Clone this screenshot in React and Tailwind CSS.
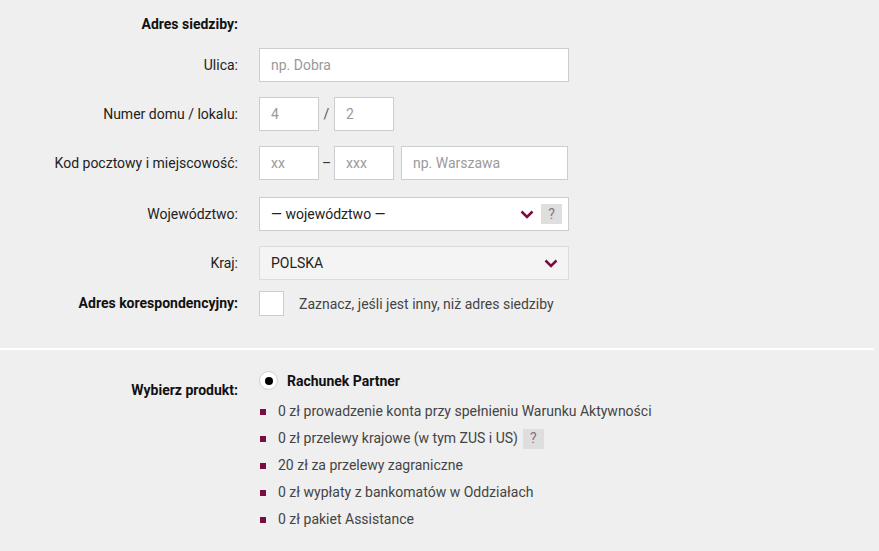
import React from 'react';

const Chevron = () => (
  <svg width="14" height="9" viewBox="0 0 14 9" fill="none">
    <path d="M1.5 1.5L7 7l5.5-5.5" stroke="#7b0c3f" strokeWidth="2.5" />
  </svg>
);

const Help = ({ className = '' }) => (
  <span className={`flex h-[20px] w-[21px] items-center justify-center bg-[#dedede] text-[14px] text-[#8a6f8a] ${className}`}>?</span>
);

const Row = ({ label, bold, children, className = '' }) => (
  <div className={`flex items-center ${className}`}>
    <div className={`w-[238px] shrink-0 text-right text-[14px] ${bold ? 'font-bold text-[#111]' : 'text-[#222]'}`}>
      {label}
    </div>
    <div className="ml-[21px] flex items-center">{children}</div>
  </div>
);

const Field = ({ placeholder, width, value }) => (
  <div className={`flex h-[34px] ${width} items-center border border-[#cdcdcd] bg-white px-[11px] pt-[1px] text-[14px] ${value ? 'text-[#222]' : 'text-[#9a9a9a]'}`}>
    {value || placeholder}
  </div>
);

const features = [
  { text: '0 zł prowadzenie konta przy spełnieniu Warunku Aktywności' },
  { text: '0 zł przelewy krajowe (w tym ZUS i US)', help: true },
  { text: '20 zł za przelewy zagraniczne' },
  { text: '0 zł wypłaty z bankomatów w Oddziałach' },
  { text: '0 zł pakiet Assistance' },
];

export default function App() {
  return (
    <div className="h-[551px] w-[879px] overflow-hidden bg-[#efefef]" style={{ fontFamily: 'Roboto, "Liberation Sans", sans-serif' }}>
      {/* Adres */}
      <div className="pt-[15px]">
        <Row label="Adres siedziby:" bold className="h-[18px]" />

        <Row label="Ulica:" className="mt-[15px]">
          <Field placeholder="np. Dobra" width="w-[310px]" />
        </Row>

        <Row label="Numer domu / lokalu:" className="mt-[15px]">
          <Field placeholder="4" width="w-[60px]" />
          <span className="w-[15px] text-center text-[14px] text-[#555]">/</span>
          <Field placeholder="2" width="w-[60px]" />
        </Row>

        <Row label="Kod pocztowy i miejscowość:" className="mt-[15px]">
          <Field placeholder="xx" width="w-[60px]" />
          <span className="w-[15px] text-center text-[14px] text-[#333]">–</span>
          <Field placeholder="xxx" width="w-[60px]" />
          <div className="w-[7px]" />
          <Field placeholder="np. Warszawa" width="w-[167px]" />
        </Row>

        <Row label="Województwo:" className="mt-[17px]">
          <div className="flex h-[34px] w-[310px] items-center border border-[#cdcdcd] bg-white pl-[11px] pr-[6px] text-[14px] text-[#222]">
            <span className="flex-1">— województwo —</span>
            <Chevron />
            <Help className="ml-[7px]" />
          </div>
        </Row>

        <Row label="Kraj:" className="mt-[15px]">
          <div className="flex h-[34px] w-[310px] items-center border border-[#dcdcdc] bg-[#f4f4f4] pl-[11px] pr-[10px] text-[14px] text-[#222]">
            <span className="flex-1">POLSKA</span>
            <Chevron />
          </div>
        </Row>

        <Row label="Adres korespondencyjny:" bold className="mt-[11px]">
          <div className="h-[25px] w-[25px] border border-[#cdcdcd] bg-white" />
          <span className="ml-[15px] pt-[2px] text-[14px] text-[#444]">Zaznacz, jeśli jest inny, niż adres siedziby</span>
        </Row>
      </div>

      <div className="mt-[32px] h-[2px] w-[874px] bg-white" />

      {/* Produkt */}
      <div className="mt-[19px] flex">
        <div className="mt-[11px] w-[238px] shrink-0 text-right text-[14px] font-bold text-[#111]">Wybierz produkt:</div>
        <div className="ml-[21px]">
          <div className="flex items-center">
            <div className="flex h-[19px] w-[19px] items-center justify-center rounded-full border border-[#d0d0d0] bg-white">
              <div className="h-[8px] w-[8px] rounded-full bg-black" />
            </div>
            <span className="ml-[9px] pt-[2px] text-[14px] font-bold text-[#111]">Rachunek Partner</span>
          </div>
          <ul className="mt-[6px]">
            {features.map((f) => (
              <li key={f.text} className="flex h-[27px] items-center text-[14px] text-[#444]">
                <span className="ml-[1px] mr-[12px] h-[6px] w-[6px] bg-[#7b0c3f]" />
                <span>{f.text}</span>
                {f.help && <Help className="ml-[5px]" />}
              </li>
            ))}
          </ul>
        </div>
      </div>
    </div>
  );
}
